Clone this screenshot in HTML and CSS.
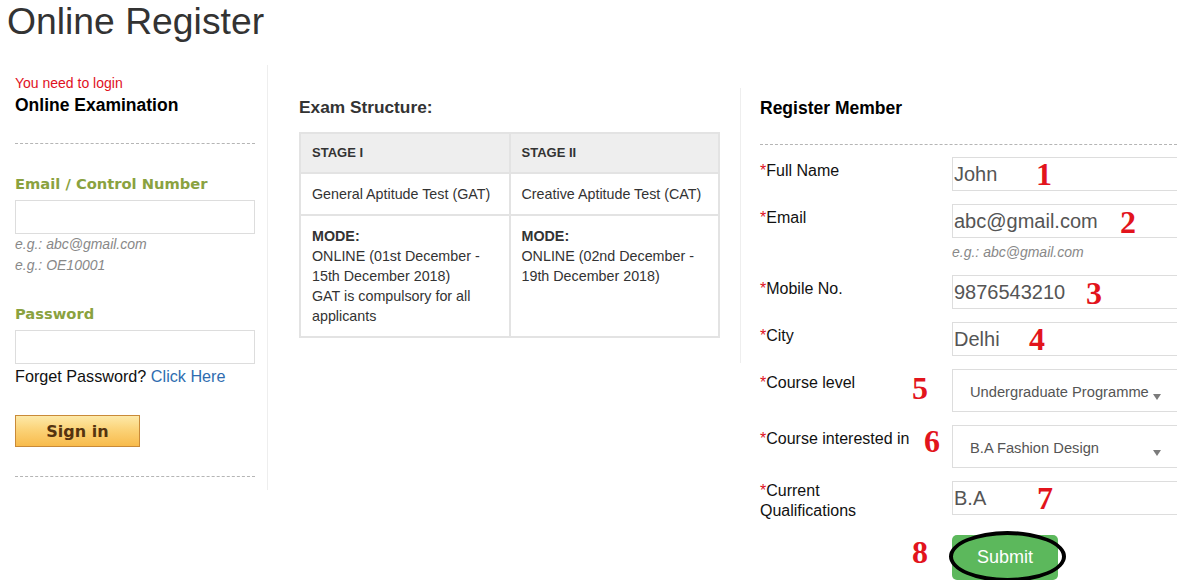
FILE: index.html
```html
<!DOCTYPE html>
<html lang="en">
<head>
    <meta charset="UTF-8">
    <meta name="viewport" content="width=device-width, initial-scale=1.0">
    <title>Online Register</title>
    <link rel="stylesheet" href="styles.css">
</head>
<body>
    <h1 class="page-title">Online Register</h1>
    <div class="layout">
        <aside class="login-col">
            <p class="login-note">You need to login</p>
            <h3 class="col-title">Online Examination</h3>
            <hr class="dashed">
            <label class="green-label" for="loginId">Email / Control Number</label>
            <input type="text" id="loginId" class="text-box">
            <p class="hint">e.g.: abc@gmail.com<br>e.g.: OE10001</p>
            <label class="green-label pass-label" for="loginPass">Password</label>
            <input type="password" id="loginPass" class="text-box">
            <p class="forget">Forget Password? <a href="#">Click Here</a></p>
            <button class="signin-btn">Sign in</button>
            <hr class="dashed signin-rule">
        </aside>

        <section class="exam-col">
            <h3 class="exam-title">Exam Structure:</h3>
            <table class="exam-table">
                <thead>
                    <tr>
                        <th>STAGE I</th>
                        <th>STAGE II</th>
                    </tr>
                </thead>
                <tbody>
                    <tr>
                        <td>General Aptitude Test (GAT)</td>
                        <td>Creative Aptitude Test (CAT)</td>
                    </tr>
                    <tr>
                        <td><strong>MODE:</strong><br>ONLINE (01st December - 15th December 2018)<br>GAT is compulsory for all applicants</td>
                        <td><strong>MODE:</strong><br>ONLINE (02nd December - 19th December 2018)</td>
                    </tr>
                </tbody>
            </table>
        </section>

        <section class="register-col">
            <h3 class="col-title register-title">Register Member</h3>
            <hr class="dashed register-rule">
            <form class="register-form">
                <label class="field-label"><span class="req">*</span>Full Name</label>
                <div><input type="text" class="field-input" value="John"></div>

                <label class="field-label"><span class="req">*</span>Email</label>
                <div>
                    <input type="text" class="field-input" value="abc@gmail.com">
                    <p class="field-hint">e.g.: abc@gmail.com</p>
                </div>

                <label class="field-label"><span class="req">*</span>Mobile No.</label>
                <div><input type="text" class="field-input" value="9876543210"></div>

                <label class="field-label"><span class="req">*</span>City</label>
                <div><input type="text" class="field-input" value="Delhi"></div>

                <label class="field-label"><span class="req">*</span>Course level</label>
                <div class="select-wrap">
                    <select class="field-select">
                        <option>Undergraduate Programme</option>
                    </select>
                </div>

                <label class="field-label"><span class="req">*</span>Course interested in</label>
                <div class="select-wrap">
                    <select class="field-select">
                        <option>B.A Fashion Design</option>
                    </select>
                </div>

                <label class="field-label field-label-tight"><span class="req">*</span>Current<br>Qualifications</label>
                <div><input type="text" class="field-input" value="B.A"></div>

                <div></div>
                <div class="submit-cell">
                    <button type="button" class="submit-btn">Submit</button>
                    <span class="circle-mark"></span>
                </div>
            </form>

            <!-- step numbers drawn over the form -->
            <span class="step step-1">1</span>
            <span class="step step-2">2</span>
            <span class="step step-3">3</span>
            <span class="step step-4">4</span>
            <span class="step step-5">5</span>
            <span class="step step-6">6</span>
            <span class="step step-7">7</span>
            <span class="step step-8">8</span>
        </section>
    </div>
</body>
</html>
```

FILE: styles.css
```css
body {
    margin: 0;
    font-family: "Liberation Sans", Arial, sans-serif;
    color: #111;
    background: #fff;
    overflow: hidden;
}
.page-title {
    margin: 0 0 23px;
    padding-left: 7px;
    font-size: 37.3px;
    line-height: 42px;
    font-weight: normal;
    color: #333;
}
.layout {
    display: flex;
    align-items: flex-start;
}
.dashed {
    border: none;
    border-top: 1px dashed #b5b5b5;
    margin: 0;
}

/* login column */
.login-col {
    width: 240px;
    flex: none;
    padding: 8px 12px 13px 15px;
    border-right: 1px solid #eee;
}
.login-note {
    margin: 0;
    font-size: 14px;
    line-height: 20px;
    color: #e0101e;
}
.col-title {
    margin: 0;
    font-size: 17.5px;
    line-height: 24px;
    color: #000;
}
.login-col .dashed {
    margin-top: 26px;
}
.green-label {
    display: block;
    margin-top: 30px;
    margin-bottom: 6px;
    font-family: "DejaVu Sans", Verdana, sans-serif;
    font-weight: bold;
    font-size: 14.7px;
    line-height: 20px;
    color: #8aa23f;
}
.pass-label {
    margin-top: 28px;
}
.text-box {
    display: block;
    box-sizing: border-box;
    width: 100%;
    height: 34px;
    margin: 0;
    border: 1px solid #ddd;
    background: #fff;
}
.hint {
    margin: 0;
    font-size: 14px;
    line-height: 21px;
    font-style: italic;
    color: #888;
}
.forget {
    margin: 0;
    font-size: 16.2px;
    line-height: 24px;
}
.forget a {
    color: #2f6db0;
    text-decoration: none;
}
.signin-btn {
    display: block;
    width: 125px;
    height: 32px;
    margin-top: 27px;
    padding: 0;
    border: 1px solid #c98a38;
    background: linear-gradient(#fde9a8, #fbd378 45%, #f8bb4c);
    font-family: "DejaVu Sans", Verdana, sans-serif;
    font-weight: bold;
    font-size: 16px;
    color: #55330f;
}
.login-col .signin-rule {
    margin-top: 29px;
}

/* exam column */
.exam-col {
    width: 421px;
    flex: none;
    margin-top: 23px;
    padding: 8px 20px 25px 31px;
    border-right: 1px solid #eee;
}
.exam-title {
    margin: 0 0 14px;
    font-size: 17.3px;
    line-height: 22px;
    color: #333;
}
.exam-table {
    width: 100%;
    border-collapse: collapse;
    border: 2px solid #e3e3e3;
    color: #333;
}
.exam-table th,
.exam-table td {
    width: 50%;
    padding: 10px 11px;
    border: 2px solid #e3e3e3;
    line-height: 20px;
    text-align: left;
    vertical-align: top;
}
.exam-table th {
    padding-top: 9px;
    padding-bottom: 9px;
    font-size: 13px;
    background: #eee;
}
.exam-table td {
    font-size: 14.3px;
}

/* register column */
.register-col {
    position: relative;
    width: 422px;
    flex: none;
    margin-top: 23px;
    padding: 9px 0 0 19px;
}
.register-title {
    font-size: 17.5px;
    line-height: 22px;
}
.register-rule {
    margin: 25px 0 12px;
}
.register-form {
    display: grid;
    grid-template-columns: 192px 230px;
    row-gap: 13px;
}
.field-label {
    max-width: 152px;
    padding-top: 4px;
    font-size: 16px;
    line-height: 20px;
    color: #111;
}
.field-label-tight {
    padding-top: 0;
}
.req {
    color: #e0101e;
}
.field-input {
    display: block;
    box-sizing: border-box;
    width: 100%;
    height: 34px;
    margin: 0;
    padding: 0 1px;
    border: 1px solid #ddd;
    font-family: "Liberation Sans", Arial, sans-serif;
    font-size: 20px;
    color: #555;
}
.field-hint {
    margin: 4px 0 0;
    font-size: 14px;
    line-height: 20px;
    font-style: italic;
    color: #888;
}
.select-wrap {
    position: relative;
}
.select-wrap::after {
    content: "";
    position: absolute;
    right: 21px;
    top: 25px;
    border-left: 4px solid transparent;
    border-right: 4px solid transparent;
    border-top: 6px solid #7b7b7b;
}
.field-select {
    display: block;
    box-sizing: border-box;
    width: 100%;
    height: 43px;
    margin: 0;
    padding: 2px 0 0 17px;
    border: 1px solid #ddd;
    border-radius: 0;
    background: #fff;
    appearance: none;
    -webkit-appearance: none;
    font-family: "Liberation Sans", Arial, sans-serif;
    font-size: 14.7px;
    color: #555;
}
.submit-cell {
    position: relative;
    margin-top: 1px;
}
.submit-btn {
    display: block;
    width: 106px;
    height: 45px;
    padding: 0;
    border: none;
    border-radius: 5px;
    background: #5cb85c;
    font-family: "Liberation Sans", Arial, sans-serif;
    font-size: 18px;
    color: #fff;
}
.circle-mark {
    position: absolute;
    left: -3px;
    top: -4px;
    box-sizing: border-box;
    width: 117px;
    height: 51px;
    border: 4px solid #000;
    border-radius: 50%;
}
.step {
    position: absolute;
    font-family: "Liberation Serif", "Times New Roman", serif;
    font-weight: bold;
    font-size: 32px;
    line-height: 32px;
    color: #e2141c;
}
.step-1 { left: 295px; top: 70px; }
.step-2 { left: 379px; top: 118px; }
.step-3 { left: 345px; top: 189px; }
.step-4 { left: 288px; top: 235px; }
.step-5 { left: 171px; top: 284px; }
.step-6 { left: 183px; top: 337px; }
.step-7 { left: 296px; top: 394px; }
.step-8 { left: 171px; top: 448px; }
```
